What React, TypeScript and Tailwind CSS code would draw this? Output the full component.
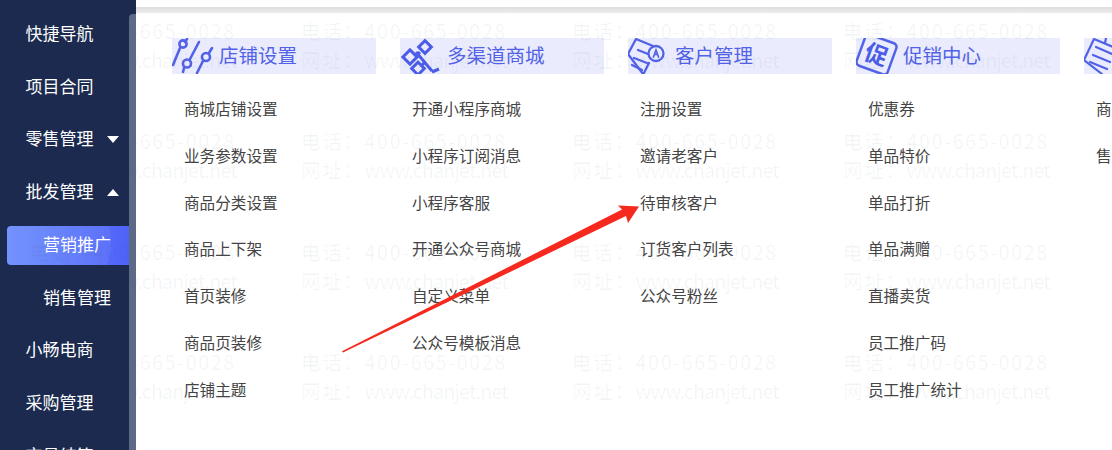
const navItems = [
  { label: '快捷导航' },
  { label: '项目合同' },
  { label: '零售管理', caret: 'down' },
  { label: '批发管理', caret: 'up' },
  { label: '营销推广', sub: true, active: true },
  { label: '销售管理', sub: true },
  { label: '小畅电商' },
  { label: '采购管理' },
  { label: '交易结算' },
];

function SlidersIcon() {
  return (
    <svg width="47" height="36" viewBox="0 0 47 36" fill="none" stroke="#5262e6" strokeWidth="2.6" strokeLinecap="round" className="shrink-0">
      <path d="M8 10 1 27" />
      <path d="M15 1 13 4" />
      <circle cx="11" cy="6" r="3.6" />
      <path d="M27 4 18 21M12 30 11 34" />
      <circle cx="15" cy="25.5" r="4" />
      <path d="M40 10 37 15M31 23 25 35" />
      <circle cx="34" cy="19" r="4" />
    </svg>
  );
}

function NetworkIcon() {
  return (
    <svg width="47" height="36" viewBox="0 0 47 36" fill="none" stroke="#4a5ce8" strokeWidth="3" className="shrink-0">
      <rect x="20.5" y="4.5" width="9" height="9" transform="rotate(45 25 9)" />
      <rect x="5" y="14" width="10" height="10" transform="rotate(45 10 19)" />
      <rect x="13.5" y="26" width="9" height="9" transform="rotate(45 18 30.5)" />
      <path d="M16 14 32 33M20 14l-2 2M24 25l-3 3M32 34l7-3" />
    </svg>
  );
}

function CustomerIcon() {
  return (
    <svg width="47" height="36" viewBox="0 0 47 36" fill="none" stroke="#5262e6" strokeWidth="2.3" strokeLinecap="round" className="shrink-0">
      <path d="M21 25 15 37M8 1 0 16 15 36M8 1l17 7" />
      <path d="M10 12l10 4M6 20l13 5M4 27l10 5" />
      <circle cx="28" cy="15.5" r="7.5" />
      <path d="M25.5 19l2.5-7 2.5 7M26.5 16.5h3" strokeWidth="1.7" />
    </svg>
  );
}

function PromoIcon() {
  return (
    <svg width="47" height="36" viewBox="0 0 47 36" fill="none" className="shrink-0">
      <g transform="rotate(20 20.5 16.5)">
        <rect x="4" y="0" width="33" height="33" rx="4" stroke="#5262e6" strokeWidth="2.5" />
        <text x="20.5" y="25" textAnchor="middle" fontSize="23" fontWeight="700" fill="#4a5ce8" className="font-['Noto_Sans_CJK_SC',sans-serif]">促</text>
      </g>
    </svg>
  );
}

function ListIcon() {
  return (
    <svg width="47" height="36" viewBox="0 0 47 36" fill="none" stroke="#5262e6" strokeWidth="2.2" strokeLinecap="round" className="shrink-0">
      <path d="M10 1 0 22 18 36M10 1l24 10" />
      <path d="M12 9 28 16M9 17l17 7M6 24l17 7M22 0l-1 5" />
    </svg>
  );
}

const columns = [
  {
    title: '店铺设置',
    icon: <SlidersIcon />,
    items: ['商城店铺设置', '业务参数设置', '商品分类设置', '商品上下架', '首页装修', '商品页装修', '店铺主题'],
  },
  {
    title: '多渠道商城',
    icon: <NetworkIcon />,
    items: ['开通小程序商城', '小程序订阅消息', '小程序客服', '开通公众号商城', '自定义菜单', '公众号模板消息'],
  },
  {
    title: '客户管理',
    icon: <CustomerIcon />,
    items: ['注册设置', '邀请老客户', '待审核客户', '订货客户列表', '公众号粉丝'],
  },
  {
    title: '促销中心',
    icon: <PromoIcon />,
    items: ['优惠券', '单品特价', '单品打折', '单品满赠', '直播卖货', '员工推广码', '员工推广统计'],
  },
  {
    title: '',
    icon: <ListIcon />,
    items: ['商', '售'],
  },
];

function Watermark() {
  const tiles = Array.from({ length: 20 });
  return (
    <div className="pointer-events-none absolute left-[30px] top-[16px] flex w-[1084px] flex-wrap">
      {tiles.map((_, i) => (
        <div key={i} className="h-[110.4px] w-[271px] text-[19.5px] leading-[29px] tracking-[1.7px] whitespace-nowrap text-[#3a4560]/[0.06]">
          <div>电话：400-665-0028</div>
          <div>
            网址：<span className="tracking-[-0.75px]">www.chanjet.net</span>
          </div>
        </div>
      ))}
    </div>
  );
}

function Arrow() {
  return (
    <svg width="1112" height="450" viewBox="0 0 1112 450" className="pointer-events-none absolute left-0 top-0">
      <polygon points="342,351.3 622,209.5 618,205.5 639,206.5 628,223 626,216 343,352.6" fill="#f5291d" />
    </svg>
  );
}

export default function App() {
  return (
    <div className="relative flex h-[450px] w-[1112px] overflow-hidden bg-white font-['Noto_Sans_CJK_SC',sans-serif]">
      <aside className="flex h-full w-[136px] shrink-0 overflow-hidden bg-[#1c2a4f]">
        <nav className="w-[129px] shrink-0 pt-[8px]">
          {navItems.map((item) => (
            <div key={item.label} className="flex h-[52.7px] items-center">
              <div
                className={
                  item.active
                    ? 'relative ml-[7px] flex h-[39px] w-[122px] items-center overflow-hidden rounded-l-[4px] bg-gradient-to-r from-[#6c8dfd] to-[#4f62f8] pl-[36px] text-[17px] text-white'
                    : item.sub
                      ? 'pl-[43px] text-[17px] text-white'
                      : 'flex items-center pl-[25.5px] text-[17px] text-white'
                }
              >
                {item.active ? <span className="absolute left-[-20px] top-[-46px] h-[124px] w-[124px] rounded-full bg-white/[0.06]" /> : null}
                <span className="relative block pb-[3px]">{item.label}</span>
                {item.caret === 'down' ? <span className="ml-[13px] h-0 w-0 border-x-[6.5px] border-t-[7px] border-x-transparent border-t-white" /> : null}
                {item.caret === 'up' ? <span className="ml-[13px] h-0 w-0 border-x-[6.5px] border-b-[7px] border-x-transparent border-b-white" /> : null}
              </div>
            </div>
          ))}
        </nav>
        <div className="mt-[14px] h-full w-[7px] shrink-0 rounded-tl-[4px] bg-[#5d6a87]" />
      </aside>

      <main className="flex min-w-0 flex-1 flex-col">
        <div className="h-[7px] shrink-0 bg-white" />
        <div className="h-[6px] shrink-0 bg-gradient-to-b from-[#dedede] to-[#ececec]" />
        <div className="flex gap-[24px] pl-[36px] pt-[25px]">
          {columns.map((col, i) => (
            <section key={i} className="w-[204px] shrink-0">
              <div className="flex h-[36px] items-center overflow-hidden bg-[#eaecfe]">
                {col.icon}
                {col.title ? <span className="pb-[2px] text-[19.5px] leading-none text-[#5262e6]">{col.title}</span> : null}
              </div>
              <ul className="mt-[11px]">
                {col.items.map((label) => (
                  <li key={label} className="pl-[12px] text-[15.6px] leading-[46.8px] text-[#444]">
                    {label}
                  </li>
                ))}
              </ul>
            </section>
          ))}
        </div>
      </main>

      <Watermark />
      <Arrow />
    </div>
  );
}
